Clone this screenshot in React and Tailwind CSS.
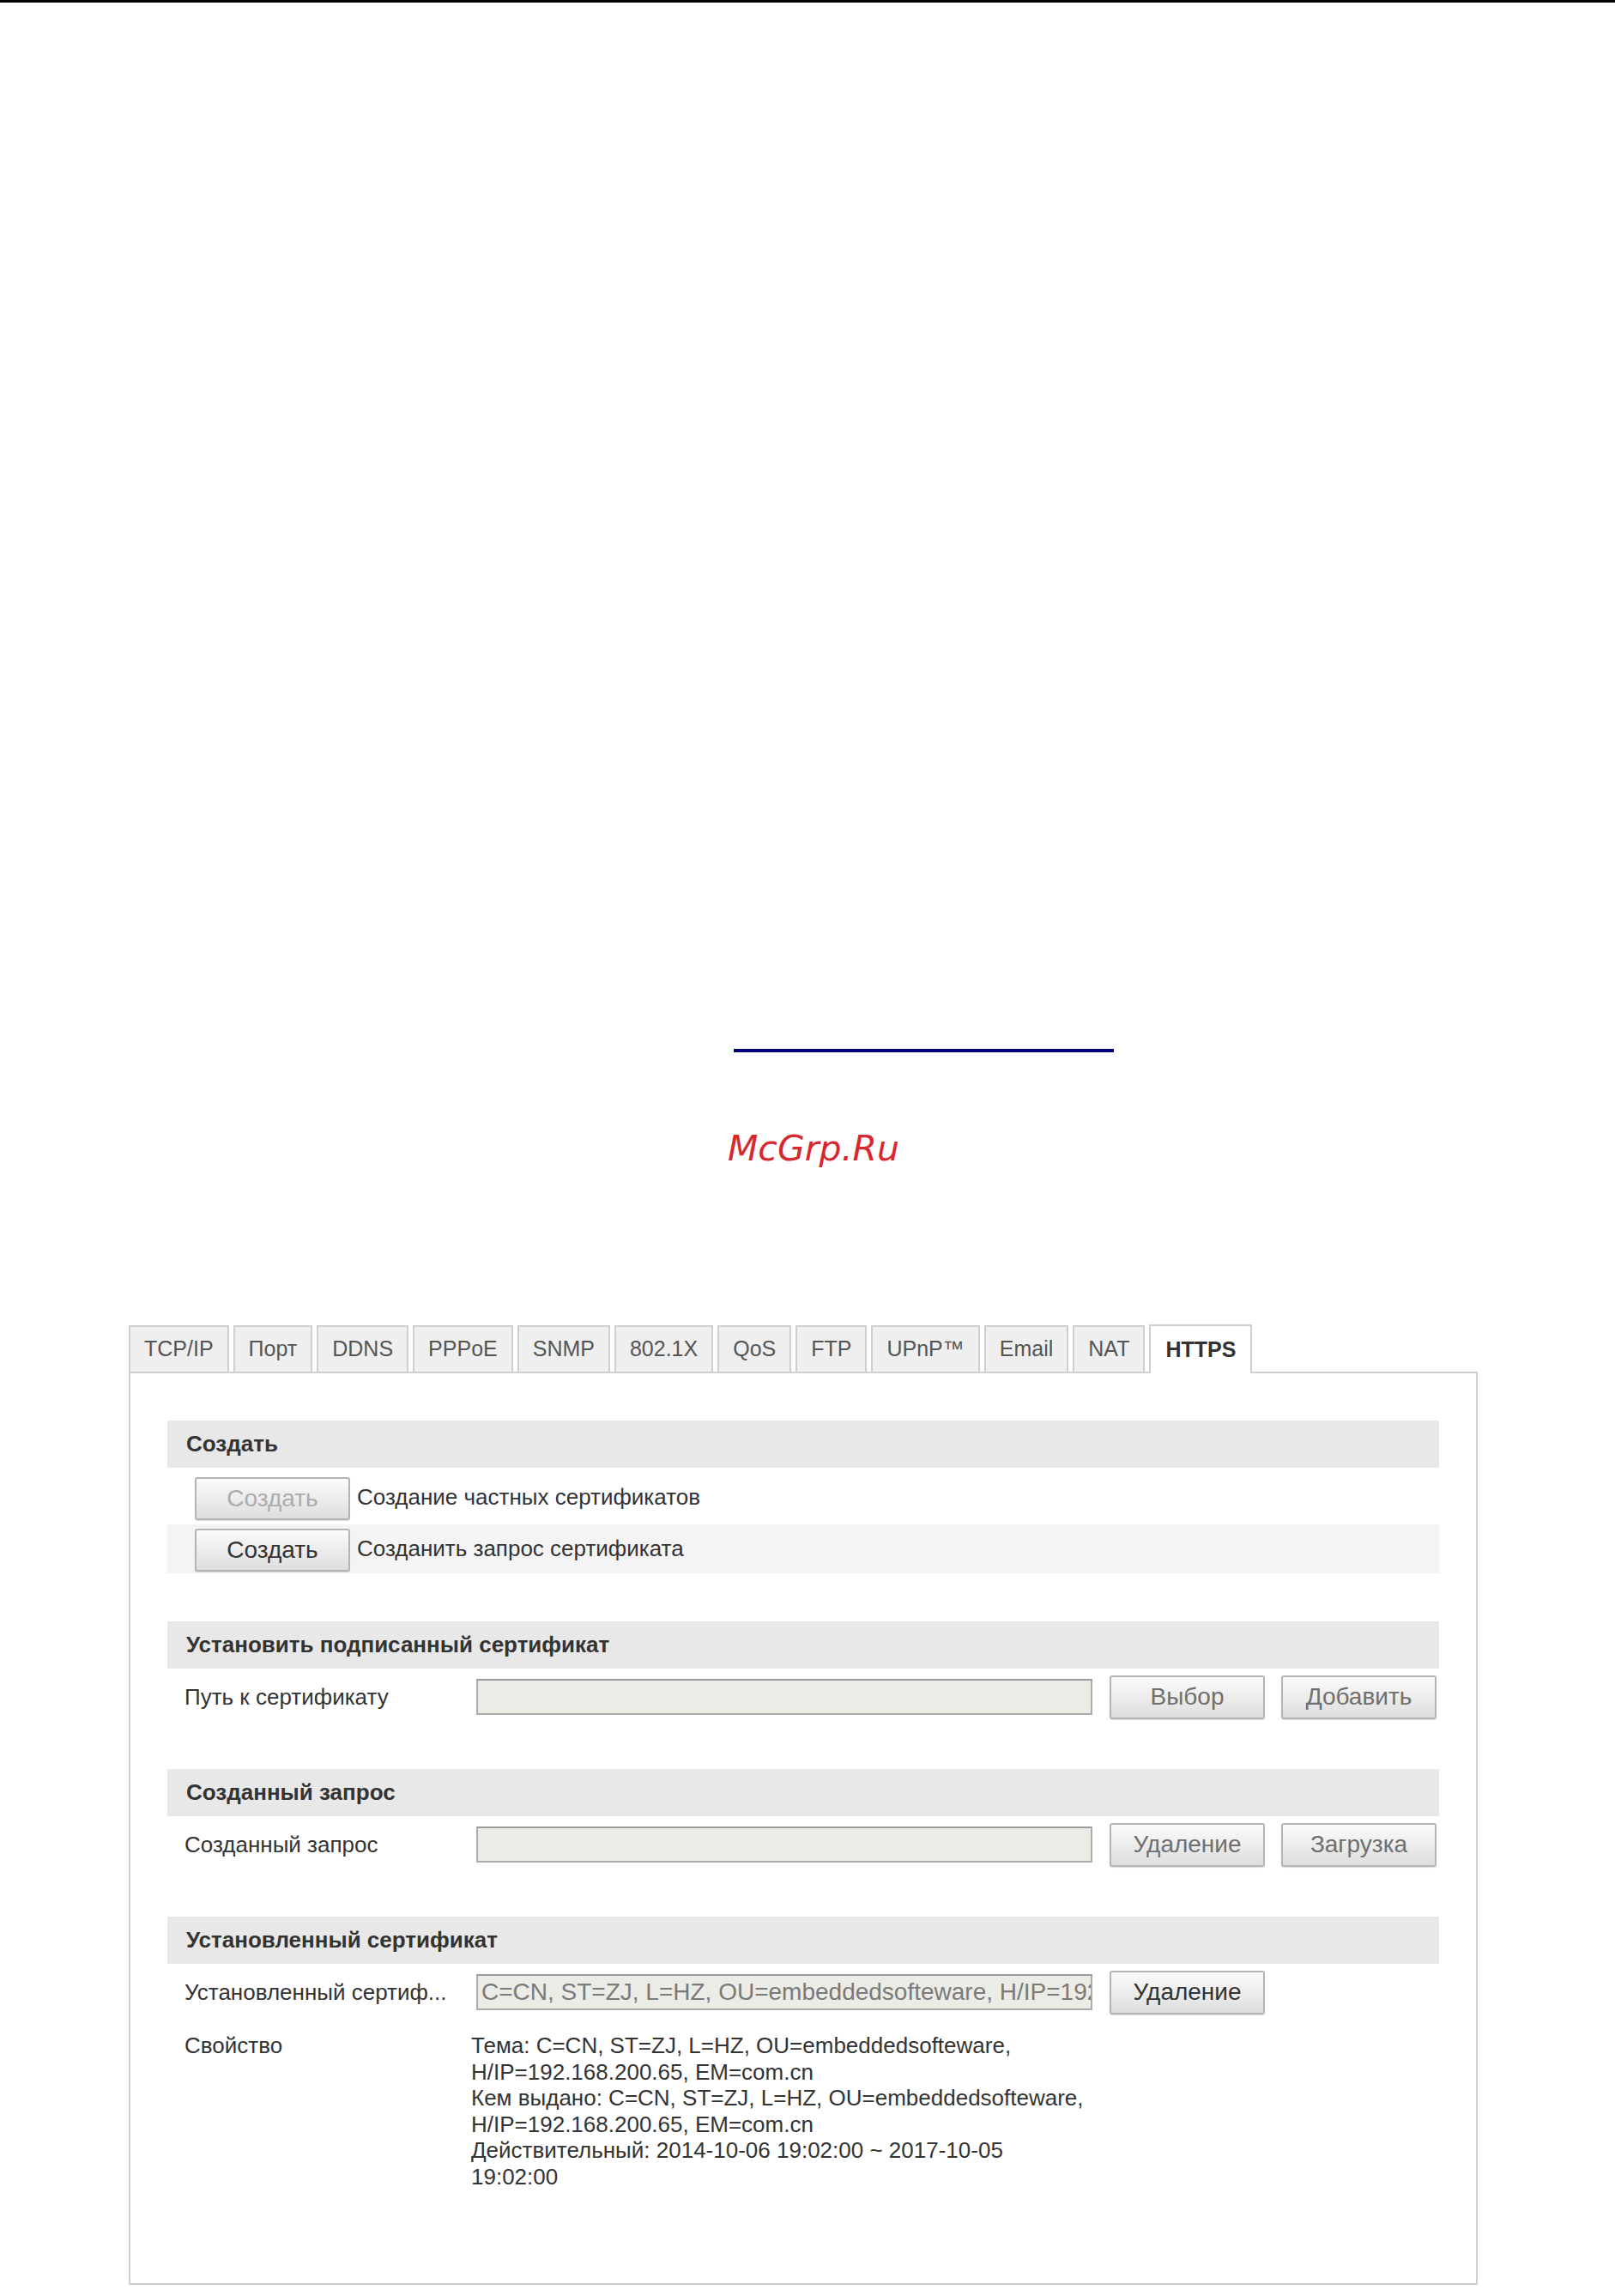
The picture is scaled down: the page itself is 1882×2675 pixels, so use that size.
import React from "react";

const tabs = ["TCP/IP", "Порт", "DDNS", "PPPoE", "SNMP", "802.1X", "QoS", "FTP", "UPnP™", "Email", "NAT"];

function Btn({ children, tone = "dark", className = "" }) {
  const color = tone === "off" ? "text-[#acacac]" : tone === "mid" ? "text-[#6f6f6f]" : "text-[#333]";
  return (
    <button
      className={
        "shrink-0 w-[181px] h-[50px] rounded-[3px] border-2 border-[#b4b4b4] bg-gradient-to-b from-[#fbfbfb] to-[#dedede] text-[28px] leading-none shadow-[0_1px_1px_rgba(0,0,0,0.15)] " +
        color +
        " " +
        className
      }
    >
      {children}
    </button>
  );
}

function Header({ children }) {
  return (
    <div className="h-[55px] bg-[#e8e8e8] pl-[22px] flex items-center text-[26px] font-bold text-[#333]">
      {children}
    </div>
  );
}

function Field({ value }) {
  return (
    <div className="w-[718px] h-[42px] shrink-0 bg-[#ecece7] border-2 border-[#acacac] border-t-[#9a9a9a] px-[4px] flex items-center overflow-hidden whitespace-nowrap text-[28px] text-[#7a7a7a]">
      {value}
    </div>
  );
}

function FieldRow({ label, value, buttons }) {
  return (
    <div className="h-[66px] flex items-center pl-[20px]">
      <div className="w-[340px] shrink-0 text-[26px] text-[#333] whitespace-nowrap">{label}</div>
      <Field value={value} />
      {buttons.map((b, i) => (
        <Btn key={i} tone={b.tone} className={i === 0 ? "ml-[20px] h-[51px]" : "ml-[19px] h-[51px]"}>
          {b.text}
        </Btn>
      ))}
    </div>
  );
}

export default function App() {
  const props = [
    "Тема: C=CN, ST=ZJ, L=HZ, OU=embeddedsofteware,",
    "H/IP=192.168.200.65, EM=com.cn",
    "Кем выдано: C=CN, ST=ZJ, L=HZ, OU=embeddedsofteware,",
    "H/IP=192.168.200.65, EM=com.cn",
    "Действительный: 2014-10-06 19:02:00 ~ 2017-10-05",
    "19:02:00",
  ];

  return (
    <div className="w-[1882px] h-[2675px] bg-white overflow-hidden font-['Liberation_Sans',Arial,sans-serif]">
      <div className="h-[3px] bg-black" />
      <div className="h-[4px] w-[443px] ml-[855px] mt-[1219px] bg-[#000080]" />
      <div className="mt-[92px] ml-[848px] text-[41px] leading-none italic font-['DejaVu_Sans',sans-serif] text-[#d6282e]">
        McGrp.Ru
      </div>

      <div className="mt-[184px] ml-[150px] w-[1572px]">
        {/* tabs */}
        <div className="flex items-end gap-[5px] relative z-10 -mb-[2px]">
          {tabs.map((t) => (
            <div
              key={t}
              className="h-[54px] mb-[2px] px-[16px] flex items-center border-2 border-b-0 border-[#cfcfcf] bg-[#efefef] text-[25px] text-[#555]"
            >
              {t}
            </div>
          ))}
          <div className="h-[57px] px-[17px] flex items-center border-2 border-b-0 border-[#cfcfcf] bg-white text-[25px] font-bold text-[#333]">
            HTTPS
          </div>
        </div>

        {/* panel */}
        <div className="h-[1064px] border-2 border-[#cfcfcf] pt-[55px] px-[43px]">
          <Header>Создать</Header>
          <div className="h-[66px] pt-[11px] pl-[32px] flex items-start bg-white">
            <div className="flex items-center">
              <Btn tone="off">Создать</Btn>
              <span className="ml-[8px] -mt-[4px] text-[26px] text-[#333]">Создание частных сертификатов</span>
            </div>
          </div>
          <div className="h-[57px] pt-[5px] pl-[32px] flex items-start bg-[#f4f4f4]">
            <div className="flex items-center">
              <Btn>Создать</Btn>
              <span className="ml-[8px] -mt-[4px] text-[26px] text-[#333]">Созданить запрос сертификата</span>
            </div>
          </div>

          <div className="mt-[56px]">
            <Header>Установить подписанный сертификат</Header>
            <FieldRow
              label="Путь к сертификату"
              value=""
              buttons={[
                { text: "Выбор", tone: "mid" },
                { text: "Добавить", tone: "mid" },
              ]}
            />
          </div>

          <div className="mt-[51px]">
            <Header>Созданный запрос</Header>
            <FieldRow
              label="Созданный запрос"
              value=""
              buttons={[
                { text: "Удаление", tone: "mid" },
                { text: "Загрузка", tone: "mid" },
              ]}
            />
          </div>

          <div className="mt-[51px]">
            <Header>Установленный сертификат</Header>
            <FieldRow
              label="Установленный сертиф..."
              value="C=CN, ST=ZJ, L=HZ, OU=embeddedsofteware, H/IP=192.168.200.65, EM=com.cn"
              buttons={[{ text: "Удаление", tone: "dark" }]}
            />
            <div className="mt-[14px] flex pl-[20px] text-[26px] leading-[30.6px] text-[#333]">
              <div className="w-[334px] shrink-0">Свойство</div>
              <div>
                {props.map((l, i) => (
                  <div key={i}>{l}</div>
                ))}
              </div>
            </div>
          </div>
        </div>
      </div>
    </div>
  );
}
